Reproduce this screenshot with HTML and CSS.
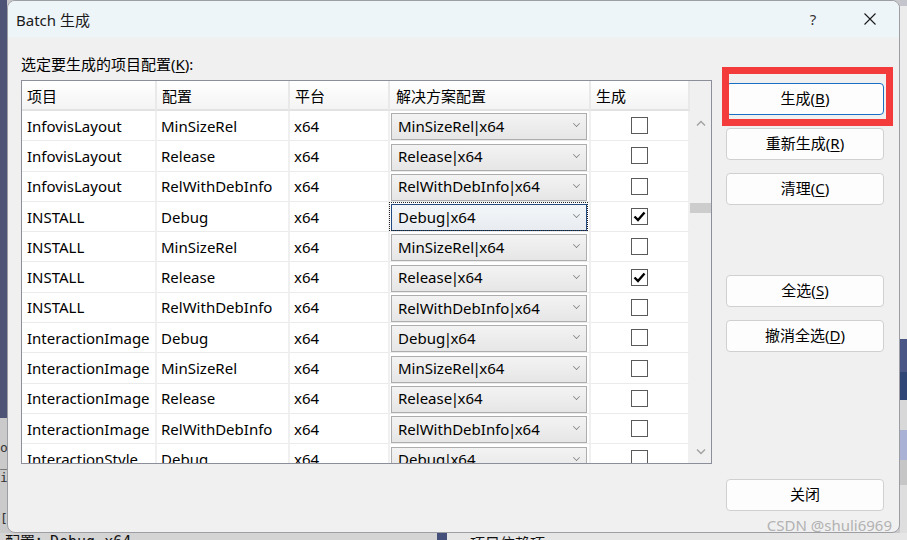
FILE: index.html
```html
<!DOCTYPE html>
<html lang="zh">
<head>
<meta charset="utf-8">
<title>Batch 生成</title>
<link rel="stylesheet" href="styles.css">
</head>
<body>
<div class="screen">
  <div class="bg-left">
    <div class="bl-dark"></div>
    <div class="bl-light">
      <span>o.</span>
      <span>_</span>
      <span>i</span>
      <span class="gap">[I</span>
    </div>
  </div>

  <div class="dialog">
    <div class="titlebar">
      <span class="title">Batch 生成</span>
      <span class="help">?</span>
      <span class="close">
        <svg width="12" height="12" viewBox="0 0 12 12"><path d="M0.5 0.5 L11.5 11.5 M11.5 0.5 L0.5 11.5" stroke="#1a1a1a" stroke-width="1.1" fill="none"/></svg>
      </span>
    </div>

    <div class="body">
      <div class="left">
        <div class="label">选定要生成的项目配置(<u>K</u>):</div>
        <div class="grid">
          <div class="grid-main">
            <div class="row head">
              <div class="cell c1">项目</div>
              <div class="cell c2">配置</div>
              <div class="cell c3">平台</div>
              <div class="cell c4">解决方案配置</div>
              <div class="cell c5 hc5">生成</div>
            </div>

            <div class="row">
              <div class="cell c1">InfovisLayout</div>
              <div class="cell c2">MinSizeRel</div>
              <div class="cell c3">x64</div>
              <div class="cell c4"><div class="combo"><span>MinSizeRel<i class="bar">|</i>x64</span><span class="chev"></span></div></div>
              <div class="cell c5"><span class="chk"></span></div>
            </div>
            <div class="row">
              <div class="cell c1">InfovisLayout</div>
              <div class="cell c2">Release</div>
              <div class="cell c3">x64</div>
              <div class="cell c4"><div class="combo"><span>Release<i class="bar">|</i>x64</span><span class="chev"></span></div></div>
              <div class="cell c5"><span class="chk"></span></div>
            </div>
            <div class="row">
              <div class="cell c1">InfovisLayout</div>
              <div class="cell c2">RelWithDebInfo</div>
              <div class="cell c3">x64</div>
              <div class="cell c4"><div class="combo"><span>RelWithDebInfo<i class="bar">|</i>x64</span><span class="chev"></span></div></div>
              <div class="cell c5"><span class="chk"></span></div>
            </div>
            <div class="row">
              <div class="cell c1">INSTALL</div>
              <div class="cell c2">Debug</div>
              <div class="cell c3">x64</div>
              <div class="cell c4 focus"><div class="combo active"><span>Debug<i class="bar">|</i>x64</span><span class="chev"></span></div></div>
              <div class="cell c5"><span class="chk on"><svg width="15" height="15" viewBox="0 0 15 15"><path d="M2.5 7.5 L6 11 L12.5 3.5" stroke="#000" stroke-width="2.4" fill="none"/></svg></span></div>
            </div>
            <div class="row">
              <div class="cell c1">INSTALL</div>
              <div class="cell c2">MinSizeRel</div>
              <div class="cell c3">x64</div>
              <div class="cell c4"><div class="combo"><span>MinSizeRel<i class="bar">|</i>x64</span><span class="chev"></span></div></div>
              <div class="cell c5"><span class="chk"></span></div>
            </div>
            <div class="row">
              <div class="cell c1">INSTALL</div>
              <div class="cell c2">Release</div>
              <div class="cell c3">x64</div>
              <div class="cell c4"><div class="combo"><span>Release<i class="bar">|</i>x64</span><span class="chev"></span></div></div>
              <div class="cell c5"><span class="chk on"><svg width="15" height="15" viewBox="0 0 15 15"><path d="M2.5 7.5 L6 11 L12.5 3.5" stroke="#000" stroke-width="2.4" fill="none"/></svg></span></div>
            </div>
            <div class="row">
              <div class="cell c1">INSTALL</div>
              <div class="cell c2">RelWithDebInfo</div>
              <div class="cell c3">x64</div>
              <div class="cell c4"><div class="combo"><span>RelWithDebInfo<i class="bar">|</i>x64</span><span class="chev"></span></div></div>
              <div class="cell c5"><span class="chk"></span></div>
            </div>
            <div class="row">
              <div class="cell c1">InteractionImage</div>
              <div class="cell c2">Debug</div>
              <div class="cell c3">x64</div>
              <div class="cell c4"><div class="combo"><span>Debug<i class="bar">|</i>x64</span><span class="chev"></span></div></div>
              <div class="cell c5"><span class="chk"></span></div>
            </div>
            <div class="row">
              <div class="cell c1">InteractionImage</div>
              <div class="cell c2">MinSizeRel</div>
              <div class="cell c3">x64</div>
              <div class="cell c4"><div class="combo"><span>MinSizeRel<i class="bar">|</i>x64</span><span class="chev"></span></div></div>
              <div class="cell c5"><span class="chk"></span></div>
            </div>
            <div class="row">
              <div class="cell c1">InteractionImage</div>
              <div class="cell c2">Release</div>
              <div class="cell c3">x64</div>
              <div class="cell c4"><div class="combo"><span>Release<i class="bar">|</i>x64</span><span class="chev"></span></div></div>
              <div class="cell c5"><span class="chk"></span></div>
            </div>
            <div class="row">
              <div class="cell c1">InteractionImage</div>
              <div class="cell c2">RelWithDebInfo</div>
              <div class="cell c3">x64</div>
              <div class="cell c4"><div class="combo"><span>RelWithDebInfo<i class="bar">|</i>x64</span><span class="chev"></span></div></div>
              <div class="cell c5"><span class="chk"></span></div>
            </div>
            <div class="row">
              <div class="cell c1">InteractionStyle</div>
              <div class="cell c2">Debug</div>
              <div class="cell c3">x64</div>
              <div class="cell c4"><div class="combo"><span>Debug<i class="bar">|</i>x64</span><span class="chev"></span></div></div>
              <div class="cell c5"><span class="chk"></span></div>
            </div>
          </div>
          <div class="vscroll">
            <div class="vs-head"></div>
            <div class="vs-btn up"><svg width="10" height="6" viewBox="0 0 10 6"><path d="M1 5.5 L5 1.5 L9 5.5" stroke="#a0a0a0" stroke-width="1.3" fill="none"/></svg></div>
            <div class="vs-track"><div class="vs-thumb"></div></div>
            <div class="vs-btn down"><svg width="10" height="6" viewBox="0 0 10 6"><path d="M1 0.5 L5 4.5 L9 0.5" stroke="#a0a0a0" stroke-width="1.3" fill="none"/></svg></div>
          </div>
        </div>
      </div>

      <div class="buttons">
        <div class="btn primary">生成(<u>B</u>)<span class="annot"></span></div>
        <div class="btn">重新生成(<u>R</u>)</div>
        <div class="btn">清理(<u>C</u>)</div>
        <div class="btn group">全选(<u>S</u>)</div>
        <div class="btn">撤消全选(<u>D</u>)</div>
        <div class="btn last">关闭</div>
      </div>
    </div>
    <div class="watermark">CSDN @shuli6969</div>
  </div>

  <div class="bg-right">
    <div class="br b1"></div>
    <div class="br b2"></div>
    <div class="br b3"></div>
    <div class="br b4"></div>
    <div class="br b5"></div>
    <div class="br b6"></div>
    <div class="br b7"></div>
    <div class="br b8"></div>
  </div>

  <div class="bg-bottom">
    <div class="bb1">配置：Debug x64</div>
    <div class="bb2"></div>
    <div class="bb3">项目依赖项</div>
  </div>
</div>
</body>
</html>
```

FILE: styles.css
```css
* { box-sizing: border-box; }

html, body {
  margin: 0;
  padding: 0;
}

body {
  width: 907px;
  height: 540px;
  overflow: hidden;
  font-family: "Noto Sans", "Noto Sans CJK SC", sans-serif;
  font-size: 15px;
  color: #000;
  background: #d6d6d6;
}

u { text-decoration: underline; text-underline-offset: 2px; text-decoration-thickness: 1px; }

.screen {
  display: grid;
  grid-template-columns: 7px 893px 7px;
  grid-template-rows: 533px 7px;
  width: 907px;
  height: 540px;
  background: #c9c9cc;
}

/* background (window behind the dialog) */
.bg-left {
  grid-row: 1;
  grid-column: 1;
  display: flex;
  flex-direction: column;
  overflow: hidden;
}
.bl-dark { height: 418px; background: #4e5475; }
.bl-light {
  flex: 1;
  background: #cacaca;
  font-family: "DejaVu Sans Mono", monospace;
  font-size: 13px;
  line-height: 15px;
  color: #333;
  padding-top: 22px;
  display: flex;
  flex-direction: column;
  white-space: nowrap;
}
.bl-light .gap { margin-top: 26px; }

.bg-right {
  grid-row: 1;
  grid-column: 3;
  display: flex;
  flex-direction: column;
}
.br { flex: none; }
.b1 { height: 6px; background: #c4c5cc; }
.b2 { height: 333px; background: #ececec; }
.b3 { height: 33px; background: #4a5685; }
.b4 { height: 28px; background: #2f4677; }
.b5 { height: 30px; background: #d8d8d8; }
.b6 { height: 30px; background: #a9b2d4; }
.b7 { height: 25px; background: #c6c6c6; }
.b8 { flex: 1; background: #dedede; }

.bg-bottom {
  grid-row: 2;
  grid-column: 1 / 4;
  display: flex;
  overflow: hidden;
  font-family: "DejaVu Sans Mono", "Noto Sans CJK SC", monospace;
  font-size: 15px;
  line-height: 15px;
  white-space: nowrap;
}
.bb1 { width: 437px; background: #d4d4d4; padding-left: 5px; padding-top: 2px; color: #111; }
.bb2 { width: 10px; background: #45507a; }
.bb3 { flex: 1; background: #e6e6e6; padding-left: 23px; padding-top: 2px; font-family: "Noto Sans CJK SC", sans-serif; color: #111; }

/* dialog */
.dialog {
  grid-row: 1;
  grid-column: 2;
  position: relative;
  display: flex;
  flex-direction: column;
  background: #f0f0f0;
  border: 1px solid #9c9ea4;
  border-radius: 8px;
  overflow: hidden;
}

.titlebar {
  flex: none;
  height: 36px;
  background: #eef5f9;
  display: flex;
  align-items: center;
  padding-left: 8px;
}
.title { flex: 1; font-size: 15px; color: #1a1a1a; }
.help {
  width: 40px;
  text-align: center;
  margin-right: 17px;
  color: #333;
  font-size: 15px;
}
.close {
  width: 40px;
  height: 20px;
  display: flex;
  align-items: center;
  justify-content: center;
  margin-right: 9px;
}

.body {
  flex: 1;
  display: flex;
  gap: 14px;
  padding: 17px 15px 21px 13px;
}

.left {
  width: 691px;
  display: flex;
  flex-direction: column;
}
.label {
  height: 20px;
  line-height: 20px;
  margin-bottom: 6px;
  white-space: nowrap;
}

.grid {
  height: 384px;
  border: 1px solid #8c8f99;
  display: flex;
  background: #f0f0f0;
}
.grid-main {
  width: 668px;
  overflow: hidden;
  background: #fff;
}

.row {
  display: flex;
  height: 30.3px;
}
.row.head {
  height: 30px;
  background: linear-gradient(#ffffff, #f3f3f3);
}

.cell {
  display: flex;
  align-items: center;
  padding-left: 4px;
  border-right: 2px solid #f0f0f0;
  border-bottom: 1px solid #ebebeb;
  white-space: nowrap;
  overflow: hidden;
}
.head .cell {
  border-right: 2px solid #e9e9e9;
  border-bottom: 2px solid #e2e2e2;
  padding-left: 5px;
}
.c1 { width: 135px; padding-left: 5px; }
.c2 { width: 133px; }
.c3 { width: 100px; }
.c4 { width: 201px; padding-left: 1px; align-items: flex-end; position: relative; overflow: visible; }
.c5 { width: 99px; padding-left: 0; justify-content: center; }
.head .c4 { align-items: center; padding-left: 6px; }
.head .hc5 { justify-content: flex-start; padding-left: 5px; }

.focus::after {
  content: "";
  position: absolute;
  left: -1px;
  top: 0;
  right: 1px;
  bottom: 0;
  border: 1px dotted #222;
}

.combo {
  width: 196px;
  height: 27px;
  border: 1px solid #adadad;
  background: linear-gradient(#f3f3f3, #e6e6e6);
  display: flex;
  align-items: center;
  justify-content: space-between;
  padding: 0 6px 2px 6px;
  white-space: nowrap;
}
.combo .bar {
  font-style: normal;
  margin: 0 -1.5px;
}
.combo.active {
  border-color: #224a80;
  background: linear-gradient(#f3f6f9, #e8ecf0);
}
.chev {
  width: 7px;
  height: 7px;
  border-right: 1.2px solid #777;
  border-bottom: 1.2px solid #777;
  transform: translateY(-2px) rotate(45deg) scale(0.7);
}

.chk {
  width: 17px;
  height: 17px;
  border: 1px solid #5a5a5a;
  background: #fff;
  display: flex;
  align-items: center;
  justify-content: center;
}

.vscroll {
  width: 21px;
  display: flex;
  flex-direction: column;
  background: #f0f0f0;
}
.vs-head { height: 30px; flex: none; }
.vs-btn {
  flex: none;
  display: flex;
  align-items: center;
  justify-content: center;
}
.vs-btn.up { height: 24px; }
.vs-btn.down { height: 22px; }
.vs-track { flex: 1; padding-top: 68px; }
.vs-thumb { height: 10px; background: #cdcdcd; }

/* buttons */
.buttons {
  width: 158px;
  display: flex;
  flex-direction: column;
  gap: 13px;
  padding-top: 29px;
}
.btn {
  flex: none;
  height: 32px;
  border: 1px solid #d0d0d0;
  border-radius: 4px;
  background: #fdfdfd;
  display: flex;
  align-items: center;
  justify-content: center;
  padding-bottom: 3px;
  font-size: 15px;
  white-space: nowrap;
}
.btn.primary {
  position: relative;
  border-color: #1a6fc4;
}
.btn.group { margin-top: 57px; }
.btn.last { margin-top: auto; }

.annot {
  position: absolute;
  left: -5px;
  top: -17px;
  width: 171px;
  height: 59px;
  border: 7px solid #f33b3b;
}

.watermark {
  position: absolute;
  right: 7px;
  bottom: -2px;
  line-height: 18px;
  font-size: 15px;
  color: #b2b2b2;
  white-space: nowrap;
}
```
